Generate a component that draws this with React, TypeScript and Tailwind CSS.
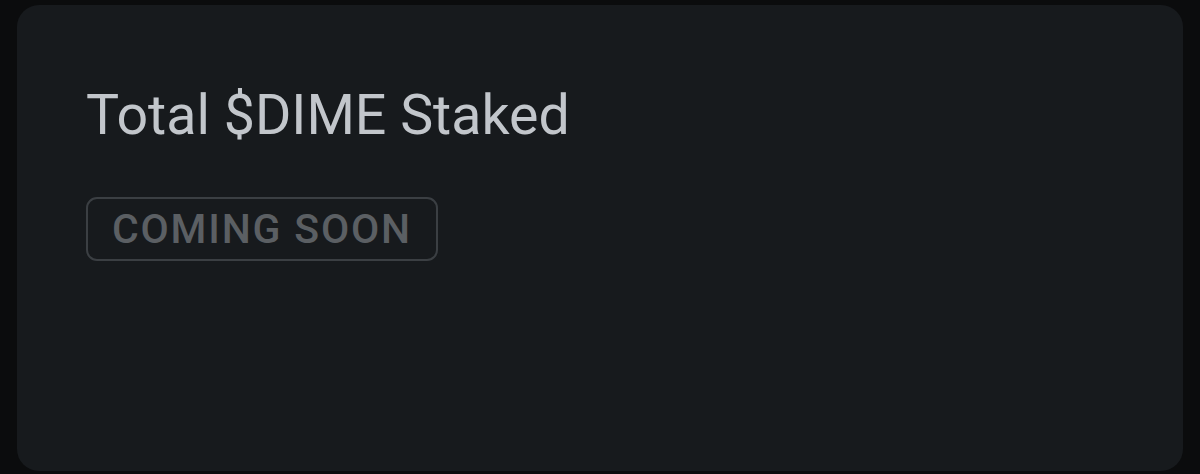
export default function App() {
  return (
    <div className="h-[474px] w-[1200px] bg-[#0b0c0d] px-[17px] pt-[5px] pb-[3px] font-['Roboto',sans-serif]">
      <div className="h-full rounded-[22px] bg-[#171a1d] pl-[69px] pt-[79px]">
        <h2 className="text-[55.5px] leading-[64px] font-normal text-[#c2c6cb] tracking-[0px]">
          Total $DIME Staked
        </h2>
        <div className="mt-[49px] inline-flex h-[64px] items-center rounded-[11px] border-2 border-[#3b3f43] pl-[24px] pr-[24px]">
          <span className="text-[41px] font-medium leading-none tracking-[1.8px] text-[#5b5f63]">
            COMING SOON
          </span>
        </div>
      </div>
    </div>
  );
}
